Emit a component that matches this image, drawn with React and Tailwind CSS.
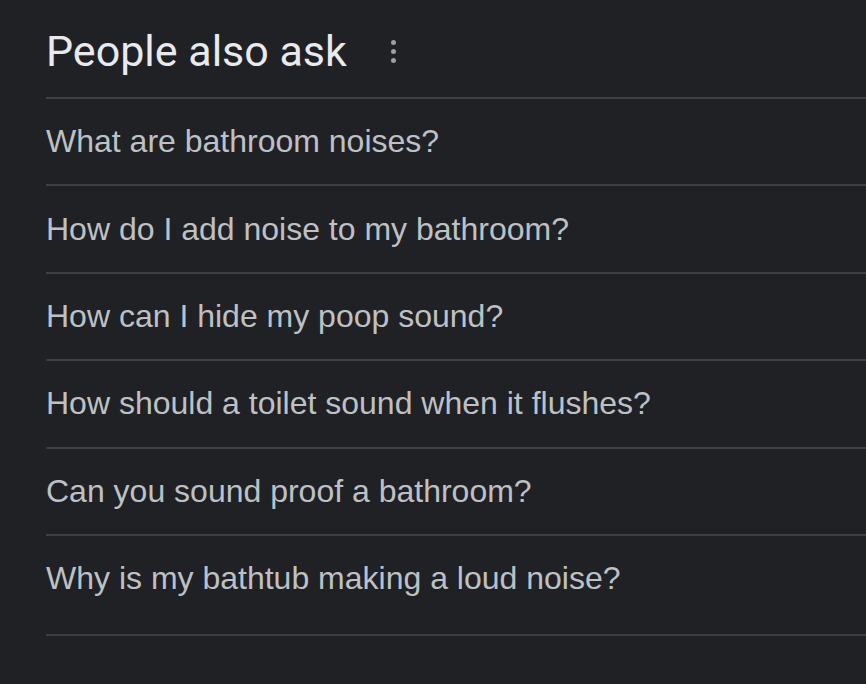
import React from "react";

const questions = [
  "What are bathroom noises?",
  "How do I add noise to my bathroom?",
  "How can I hide my poop sound?",
  "How should a toilet sound when it flushes?",
  "Can you sound proof a bathroom?",
  "Why is my bathtub making a loud noise?",
];

export default function App() {
  return (
    <div className="min-h-[684px] w-full overflow-hidden bg-[#202124]">
      <div className="pl-[46px]">
        <div className="flex h-[97px] items-start gap-[44px] pt-[30px]">
          <h2
            className="text-[43px] font-normal leading-none text-[#e8eaed]"
            style={{ fontFamily: "Roboto, 'Noto Sans', sans-serif" }}
          >
            People also ask
          </h2>
          <div className="mt-[10px] flex flex-col items-center gap-[4px]">
            <span className="block h-[5px] w-[5px] rounded-full bg-[#9aa0a6]" />
            <span className="block h-[5px] w-[5px] rounded-full bg-[#9aa0a6]" />
            <span className="block h-[5px] w-[5px] rounded-full bg-[#9aa0a6]" />
          </div>
        </div>
        <div className="border-t-2 border-[#3c4043]">
          {questions.map((q, i) => {
            const last = i === questions.length - 1;
            return (
              <div
                key={q}
                className={
                  last
                    ? "flex h-[100px] items-start border-b-2 border-[#3c4043] pt-[24px]"
                    : "flex h-[87.4px] items-center border-b-2 border-[#3c4043]"
                }
              >
                <span
                  className="text-[32px] leading-[37px] text-[#bdc1c6]"
                  style={{ fontFamily: "'Liberation Sans', Arial, sans-serif" }}
                >
                  {q}
                </span>
              </div>
            );
          })}
        </div>
      </div>
    </div>
  );
}
